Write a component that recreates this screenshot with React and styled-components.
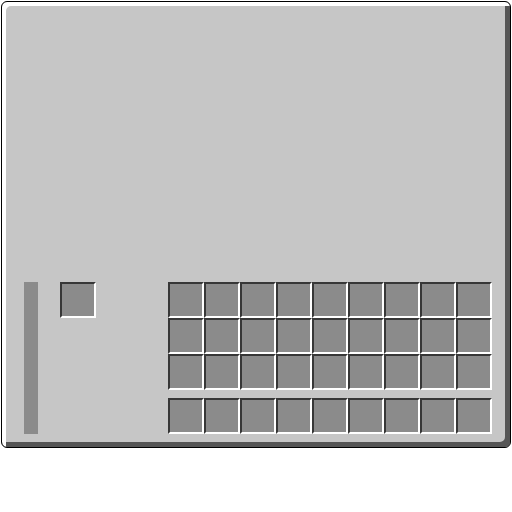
import React from 'react';
import styled, { createGlobalStyle } from 'styled-components';

const GlobalStyle = createGlobalStyle`
    html, body {
        margin: 0;
        padding: 0;
        background: #ffffff;
        font-family: "Liberation Sans", Arial, sans-serif;
    }
`;

const Panel = styled.div`
    box-sizing: border-box;
    margin: 1px 0 0 1px;
    width: 510px;
    height: 447px;
    background: #c6c6c6;
    border: 1px solid #000;
    border-radius: 6px;
    box-shadow: inset 4px 4px 0 #ffffff, inset -5px -5px 0 #555555;
    padding: 280px 0 0 22px;
    display: flex;
    align-items: flex-start;
`;

const Bar = styled.div`
    width: 14px;
    height: 152px;
    background: #8b8b8b;
`;

const Slot = styled.div`
    box-sizing: border-box;
    width: 36px;
    height: 36px;
    background: #8b8b8b;
    border: 2px solid;
    border-color: #373737 #ffffff #ffffff #373737;
    margin-left: ${p => p.$offset || 0}px;
`;

const Inventory = styled.div`
    margin-left: 72px;
    display: flex;
    flex-direction: column;
    gap: 8px;
`;

const Grid = styled.div`
    display: grid;
    grid-template-columns: repeat(9, 36px);
    grid-auto-rows: 36px;
`;

const slots = n => Array.from({ length: n }, (_, i) => <Slot key={i} />);

export default function App() {
    return (
        <>
            <GlobalStyle />
            <Panel>
                <Bar />
                <Slot $offset={22} />
                <Inventory>
                    <Grid>{slots(27)}</Grid>
                    <Grid>{slots(9)}</Grid>
                </Inventory>
            </Panel>
        </>
    );
}
